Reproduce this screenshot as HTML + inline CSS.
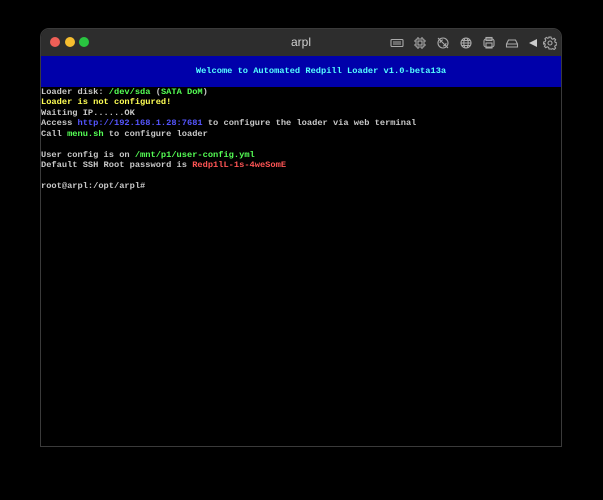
<!DOCTYPE html>
<html><head><meta charset="utf-8"><style>
html,body{margin:0;padding:0;background:#000;width:603px;height:500px;overflow:hidden}
.win{position:absolute;left:40px;top:28px;width:522px;height:419px;border:1px solid #3a3a3a;border-radius:9px 9px 0 0;background:#000;overflow:hidden;box-sizing:border-box}
.tb{position:absolute;left:0;top:0;width:100%;height:27px;background:#2d2d2d;border-bottom:1px solid #1a1a1a}
.dot{position:absolute;top:8px;width:10px;height:10px;border-radius:50%}
.title{position:absolute;left:0;width:100%;top:6px;text-align:center;color:#cfcfcf;font:12px "Liberation Sans",sans-serif}
.ban{position:absolute;left:0;top:27px;width:100%;height:31px;background:#0000aa;color:#55ffff;font:bold 8.7px/31px "Liberation Mono",monospace;text-align:center;text-indent:40px}
.term{position:absolute;left:0;top:58px;font:bold 8.7px/10.44px "Liberation Mono",monospace;color:#c8c8c8;white-space:pre}
.g{color:#55ff55}.y{color:#ffff55;font-weight:bold}.b{color:#5555ff}.r{color:#ff5555}
svg{position:absolute;top:7px}
</style></head><body>
<div class="win">
<div class="tb">
<div class="dot" style="left:9px;background:#ee5f57"></div>
<div class="dot" style="left:24px;background:#f5bd2f"></div>
<div class="dot" style="left:38px;background:#29c440"></div>
<div class="title">arpl</div>
<svg style="left:349px" width="14" height="14" viewBox="0 0 14 14" fill="none" stroke="#aaa" stroke-width="1.1"><rect x="1" y="3.5" width="12" height="7" rx="1"/><path d="M3 6h8M3 8h8"/></svg>
<svg style="left:372px" width="14" height="14" viewBox="0 0 14 14" fill="none" stroke="#aaa" stroke-width="1.1"><rect x="3" y="3" width="8" height="8" rx="1"/><rect x="5" y="5" width="4" height="4"/><path d="M5 1v2M9 1v2M5 11v2M9 11v2M1 5h2M1 9h2M11 5h2M11 9h2"/></svg>
<svg style="left:395px" width="14" height="14" viewBox="0 0 14 14" fill="none" stroke="#aaa" stroke-width="1.1"><circle cx="7" cy="7" r="5"/><path d="M2 2l10 10M4 7a3 3 0 0 1 3-3M10 7a3 3 0 0 1-3 3"/></svg>
<svg style="left:418px" width="14" height="14" viewBox="0 0 14 14" fill="none" stroke="#aaa" stroke-width="1.1"><circle cx="7" cy="7" r="5"/><ellipse cx="7" cy="7" rx="2.2" ry="5"/><path d="M2 7h10M3 4.5h8M3 9.5h8"/></svg>
<svg style="left:441px" width="14" height="14" viewBox="0 0 14 14" fill="none" stroke="#aaa" stroke-width="1.1"><rect x="2" y="3" width="10" height="8" rx="2"/><rect x="4" y="1.5" width="6" height="3"/><rect x="4" y="7" width="6" height="5"/></svg>
<svg style="left:464px" width="14" height="14" viewBox="0 0 14 14" fill="none" stroke="#aaa" stroke-width="1.1"><path d="M1.5 8l2-4h7l2 4v3h-11z M1.5 8h11"/></svg>
<svg style="left:486px" width="12" height="14" viewBox="0 0 12 14"><path d="M2 7l8-4v8z" fill="#ccc"/></svg>
<svg style="left:502px" width="14" height="14" viewBox="0 0 14 14" fill="none" stroke="#aaa" stroke-width="1.1"><circle cx="7" cy="7" r="2"/><path d="M6 1h2l.4 1.6 1.4.6 1.4-.9 1.4 1.4-.9 1.4.6 1.4 1.6.4v2l-1.6.4-.6 1.4.9 1.4-1.4 1.4-1.4-.9-1.4.6L8 13H6l-.4-1.6-1.4-.6-1.4.9-1.4-1.4.9-1.4-.6-1.4L0.6 8V6l1.6-.4.6-1.4-.9-1.4 1.4-1.4 1.4.9 1.4-.6z"/></svg>
</div>
<div class="ban">Welcome to Automated Redpill Loader v1.0-beta13a</div>
<div class="term">Loader disk: <span class="g">/dev/sda</span> (<span class="g">SATA DoM</span>)
<span class="y">Loader is not configured!</span>
Waiting IP......OK
Access <span class="b">http://192.168.1.28:7681</span> to configure the loader via web terminal
Call <span class="g">menu.sh</span> to configure loader

User config is on <span class="g">/mnt/p1/user-config.yml</span>
Default SSH Root password is <span class="r">Redp1lL-1s-4weSomE</span>

root@arpl:/opt/arpl# </div>
</div>
</body></html>
